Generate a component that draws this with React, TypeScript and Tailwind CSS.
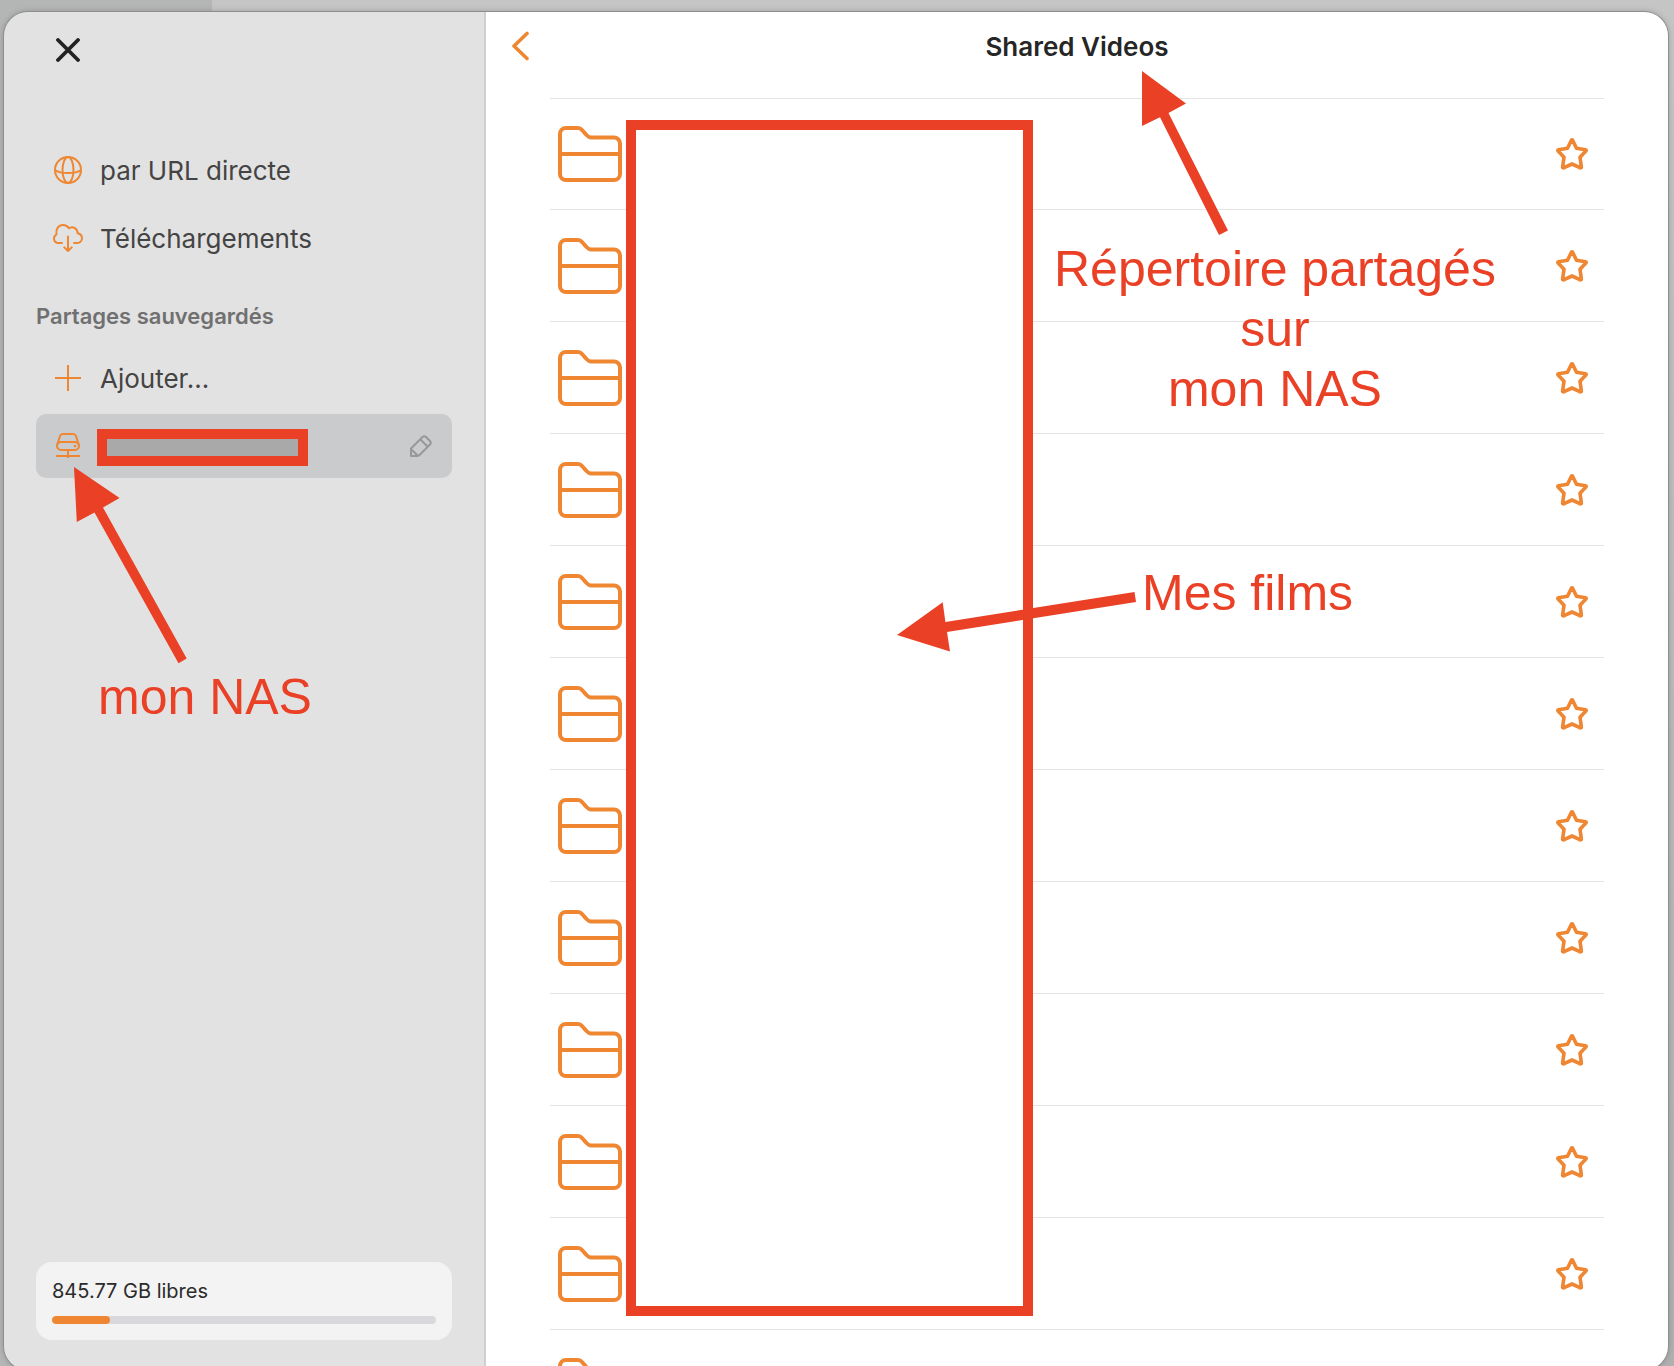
import { useState } from 'react';
import type { ReactNode } from 'react';

const FOLDER_COUNT = 12;
const USED_SPACE = 15;

function CloseIcon() {
    return (
        <svg width="24" height="24" viewBox="0 0 24 24" fill="none" stroke="#222222" strokeWidth="3.8" strokeLinecap="round">
            <path d="M2 2L22 22M22 2L2 22" />
        </svg>
    );
}

function GlobeIcon() {
    return (
        <svg width="28" height="28" viewBox="0 0 28 28" fill="none" stroke="currentColor" strokeWidth="2">
            <circle cx="14" cy="14" r="13" />
            <ellipse cx="14" cy="14" rx="5.5" ry="13" />
            <path d="M1.3 14.3C6 18 22 18 26.7 14.3" />
        </svg>
    );
}

function CloudIcon() {
    return (
        <svg width="30" height="28" viewBox="0 0 30 28" fill="none" stroke="currentColor" strokeWidth="2" strokeLinecap="round" strokeLinejoin="round">
            <path d="M9 19H5.5C2.8 19 1 17 1 14.6c0-2 .9-3.3 2.4-4.3C2.6 4.8 5.6 1 10 1c2.6 0 4.7 1.2 6 3.3C20 1.9 24.6 4.6 24.6 9.3 27.5 10 29 12 29 14.3 29 17 27 19 24.3 19H21" />
            <path d="M15 12.5V27M11.3 23.4L15 27l3.7-3.6" />
        </svg>
    );
}

function PlusIcon() {
    return (
        <svg width="26" height="26" viewBox="0 0 26 26" fill="none" stroke="currentColor" strokeWidth="2">
            <path d="M13 0V26M0 13H26" />
        </svg>
    );
}

function DriveIcon() {
    return (
        <svg width="24" height="26" viewBox="0 0 24 26" fill="none" stroke="currentColor" strokeWidth="2" strokeLinejoin="round">
            <path d="M1.2 12L4 3Q4.7 1 7 1H17Q19.3 1 20 3L22.8 12" />
            <rect x="1" y="9" width="22" height="8" rx="4" />
            <circle cx="19" cy="13" r="1.3" fill="currentColor" stroke="none" />
            <path d="M12 17V25M0 23H24" />
        </svg>
    );
}

function PencilIcon() {
    return (
        <svg width="22" height="22" viewBox="0 0 22 22" fill="none" stroke="#97989a" strokeWidth="2" strokeLinejoin="round">
            <path d="M1 13.5L12.5 2Q14.3 .4 16 2L20 6Q21.5 7.800 20 9.5L9.5 20Q8.5 21 7 21H1Z" />
            <path d="M10.5 4.500L17.5 11.5M2 15L7.5 20.5" />
        </svg>
    );
}

function BackIcon() {
    return (
        <svg width="18" height="30" viewBox="0 0 18 30" fill="none" stroke="currentColor" strokeWidth="3.6" strokeLinecap="round" strokeLinejoin="round">
            <path d="M15 2.5L2 15L15 27.5" />
        </svg>
    );
}

function FolderIcon() {
    return (
        <svg width="64" height="56" viewBox="0 0 64 56" fill="none" stroke="currentColor" strokeWidth="4">
            <path d="M2 8a6 6 0 0 1 6-6h12c2 0 3 .8 4 2l4.5 5c1.500 1.600 3 2.500 5 2.500H56a6 6 0 0 1 6 6V48a6 6 0 0 1-6 6H8a6 6 0 0 1-6-6z" />
            <path d="M2 28H62" />
        </svg>
    );
}

function StarIcon() {
    return (
        <svg width="32" height="32" viewBox="0 0 32 32" fill="none" stroke="currentColor" strokeWidth="3.6" strokeLinejoin="round">
            <path d="M15.4 2.200Q16 1.400 16.600 2.200L20.500 10.300L29.700 11.700Q30.600 12.200 29.900 13L24 19.200L25.400 29Q25.300 30 24.400 29.900L16 26L7.600 29.900Q6.700 30 6.600 29L8 19.200L2.100 13Q1.400 12.200 2.300 11.700L11.500 10.300Z" />
        </svg>
    );
}

function NavRow({ icon, label }: { icon: ReactNode; label: string }) {
    return (
        <button className="flex h-16 w-full items-center gap-4 rounded-[10px] px-4 text-left">
            <span className="flex w-8 justify-center text-[#ef8732]">{icon}</span>
            <span className="pt-0.5 text-[26px] leading-8 text-[#444444]">{label}</span>
        </button>
    );
}

function Sidebar() {
    return (
        <aside className="relative flex w-[482px] shrink-0 flex-col border-r-2 border-[#cfcfcf] bg-[#e2e2e2] px-8 pb-[30px]">
            <div className="flex h-[126px] items-start px-5 pt-[26px]">
                <button aria-label="Fermer"><CloseIcon /></button>
            </div>

            <nav className="flex flex-col gap-1">
                <NavRow icon={<GlobeIcon />} label="par URL directe" />
                <NavRow icon={<CloudIcon />} label="Téléchargements" />
            </nav>

            <h2 className="mt-[30px] mb-3.5 text-[22px] leading-8 font-semibold text-[#707070]">Partages sauvegardés</h2>

            <div className="flex flex-col gap-1">
                <NavRow icon={<PlusIcon />} label="Ajouter..." />
                <div className="flex h-16 items-center rounded-[10px] bg-[#cacbcd] pr-5 pl-4">
                    <span className="flex w-8 justify-center text-[#ef8732]"><DriveIcon /></span>
                    <span className="mt-0.5 ml-[13px] h-[37px] w-[211px] border-10 border-[#ea4025] bg-[#a9a9a9]" />
                    <button aria-label="Modifier" className="ml-auto"><PencilIcon /></button>
                </div>
            </div>

            {/* Free space */}
            <div className="mt-auto h-[78px] rounded-2xl bg-[#f3f3f3] px-4 pt-[17px]">
                <p className="text-xl leading-6 text-[#2b2b2b]">845.77 GB libres</p>
                <div className="mt-[13px] h-2 overflow-hidden rounded-full bg-[#d9d9db]">
                    <div className="h-full rounded-full bg-[#ef8732]" style={{ width: `${USED_SPACE}%` }} />
                </div>
            </div>

            {/* Note on the saved share */}
            <svg className="absolute top-[455px] left-[70px]" width="118" height="200" viewBox="74 467 118 200" fill="#ea4025">
                <path d="M74 467L119.6 498L103 507.5L186.7 658.5L178.5 663.3L94.5 512.5L76.800 522Z" />
            </svg>
            <p className="absolute top-[655px] left-[94px] font-['Liberation_Sans',Arial,sans-serif] text-[50px] leading-[60px] whitespace-nowrap text-[#ea4025]">mon NAS</p>
        </aside>
    );
}

function FolderRow() {
    const [starred, setStarred] = useState(false);

    return (
        <li className="flex h-28 items-center justify-between border-b border-[#e4e4e4] pr-4 pl-2 text-[#ef8732] first:border-t">
            <FolderIcon />
            <button aria-label="Favori" aria-pressed={starred} onClick={() => setStarred(!starred)}>
                <StarIcon />
            </button>
        </li>
    );
}

function FolderList() {
    return (
        <main className="relative min-w-0 flex-1 bg-white">
            <header className="grid h-[86px] grid-cols-[1fr_auto_1fr] items-start px-[26px] pt-[19px]">
                <button aria-label="Retour" className="justify-self-start text-[#ef8732]"><BackIcon /></button>
                <h1 className="text-[26px] leading-8 font-semibold text-[#262626]">Shared Videos</h1>
            </header>

            <div className="relative px-16">
                <ul>
                    {Array.from({ length: FOLDER_COUNT }, (_, i) => <FolderRow key={i} />)}
                </ul>
                {/* Mask over the folder names */}
                <div className="absolute top-[22px] left-[140px] h-[1196px] w-[407px] border-10 border-[#ea4025] bg-white" />
            </div>

            {/* Notes */}
            <svg className="absolute top-[59px] left-[656px]" width="90" height="168" viewBox="1142 71 90 168" fill="#ea4025">
                <path d="M1142 71L1186 103.5L1168.5 113L1228 230.5L1219 235L1160 117.3L1142 126Z" />
            </svg>
            <p className="absolute top-[227px] left-[568px] text-center font-['Liberation_Sans',Arial,sans-serif] text-[50px] leading-[60px] whitespace-nowrap text-[#ea4025]">
                Répertoire partagés<br />sur<br />mon NAS
            </p>
            <svg className="absolute top-[580px] left-[411px]" width="240" height="62" viewBox="897 592 240 62" fill="#ea4025">
                <path d="M897 635L942.7 602.3L945.4 622L1134.5 592L1136 602L947 632L950 651.5Z" />
            </svg>
            <p className="absolute top-[551px] left-[656px] font-['Liberation_Sans',Arial,sans-serif] text-[50px] leading-[60px] whitespace-nowrap text-[#ea4025]">Mes films</p>
        </main>
    );
}

export default function App() {
    return (
        <div className="h-screen overflow-hidden bg-linear-to-b from-[#c5c5c5] to-[#b0b0b0] font-['Inter',sans-serif]">
            <div className="h-full bg-linear-to-r from-[#b4b6b6] from-[212px] to-transparent to-[212px] pt-3 pr-1.5 pl-1">
                <div className="flex h-[calc(100vh-8px)] overflow-hidden rounded-3xl shadow-[0_0_0_1px_#8f8f8f,0_0_6px_#00000040]">
                    <Sidebar />
                    <FolderList />
                </div>
            </div>
        </div>
    );
}
